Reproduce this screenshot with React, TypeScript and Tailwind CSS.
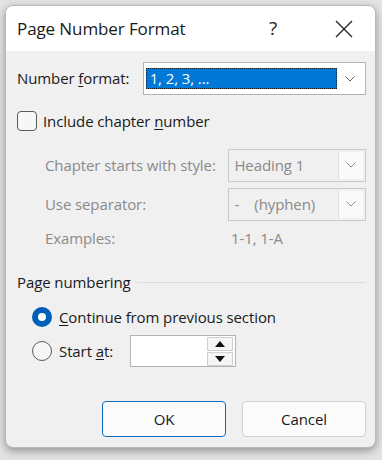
import * as React from "react";

const font = { fontFamily: '"Open Sans", "Noto Sans", sans-serif' };

function Chevron({ color = "#5f5f5f" }: { color?: string }) {
  return (
    <svg width="10" height="6" viewBox="0 0 10 6" fill="none">
      <path d="M0.5 0.5 L5 5 L9.5 0.5" stroke={color} strokeWidth="1" />
    </svg>
  );
}

function DisabledSelect({ value }: { value: string }) {
  return (
    <div className="flex h-[33px] w-[138px] items-center border border-[#c9c9c9] bg-[#f0f0f0] pl-[5px] pr-[2px]">
      <span className="flex-1 whitespace-pre text-[15px] text-[#8a8a8a]">{value}</span>
      <div className="flex h-[27px] w-[25px] items-center justify-center border-l border-[#dedede] bg-[#fafafa]">
        <Chevron color="#8a8a8a" />
      </div>
    </div>
  );
}

function Radio({ checked }: { checked?: boolean }) {
  if (checked) {
    return (
      <div className="flex h-[20px] w-[20px] items-center justify-center rounded-full bg-[#005fb8]">
        <div className="h-[8px] w-[8px] rounded-full bg-white" />
      </div>
    );
  }
  return <div className="h-[20px] w-[20px] rounded-full border border-[#5a5a5a] bg-[#f7f7f7]" />;
}

export default function App() {
  return (
    <div className="h-[460px] w-[382px] bg-[#e3e3e3] px-[5px] pt-[5px] tracking-[-0.1px]" style={font}>
      <div className="h-[443px] w-[371px] overflow-hidden rounded-t-[8px] rounded-b-[8px] border border-[#b8b8b8] bg-[#f0f0f0] shadow-[0_3px_8px_rgba(0,0,0,0.35)]">
        {/* title bar */}
        <div className="flex h-[45px] items-center bg-white pl-[11px] text-[#1a1a1a]">
          <span className="text-[17px]">Page Number Format</span>
          <span className="ml-auto mr-[58px] text-[19px] text-[#222]">?</span>
          <svg width="18" height="18" viewBox="0 0 18 18" className="mr-[22px]">
            <path d="M1 1 L17 17 M17 1 L1 17" stroke="#222" strokeWidth="1.3" />
          </svg>
        </div>

        {/* body */}
        <div className="flex flex-col pl-[11px] pr-[9px] text-[15px] text-[#1a1a1a]">
          {/* number format */}
          <div className="mt-[11px] flex items-center">
            <span className="w-[126px]">
              Number <span className="underline underline-offset-2">f</span>ormat:
            </span>
            <div className="flex h-[33px] w-[224px] items-center border border-[#b3b3b3] bg-white pl-[2px] pr-[2px]">
              <div className="flex h-[21px] flex-1 items-center border border-dotted border-[#1a1a1a] bg-[#0078d7] pl-[3px] text-white">
                1, 2, 3, ...
              </div>
              <div className="flex h-[27px] w-[26px] items-center justify-center">
                <Chevron />
              </div>
            </div>
          </div>

          {/* include chapter number */}
          <div className="mt-[15px] flex items-center">
            <div className="h-[20px] w-[20px] rounded-[4px] border border-[#5a5a5a] bg-[#f7f7f7]" />
            <span className="ml-[6px]">
              Include chapter <span className="underline underline-offset-2">n</span>umber
            </span>
          </div>

          {/* chapter style */}
          <div className="mt-[16px] flex items-center pl-[28px] text-[#8a8a8a]">
            <span className="w-[184px]">Chapter starts with style:</span>
            <DisabledSelect value="Heading 1" />
          </div>
          <div className="mt-[6px] flex items-center pl-[28px] text-[#8a8a8a]">
            <span className="w-[184px]">Use separator:</span>
            <DisabledSelect value="-    (hyphen)" />
          </div>
          <div className="mt-[6px] flex items-center pl-[28px] text-[#8a8a8a]">
            <span className="w-[186px]">Examples:</span>
            <span>1-1, 1-A</span>
          </div>

          {/* page numbering */}
          <div className="mt-[22px] flex items-center">
            <span>Page numbering</span>
            <div className="ml-[6px] h-px flex-1 bg-[#dcdcdc]" />
          </div>
          <div className="mt-[12px] flex items-center pl-[15px]">
            <Radio checked />
            <span className="ml-[7px]">
              <span className="underline underline-offset-2">C</span>ontinue from previous section
            </span>
          </div>
          <div className="mt-[7px] flex items-center pl-[15px]">
            <Radio />
            <span className="ml-[7px] w-[71px]">
              Start <span className="underline underline-offset-2">a</span>t:
            </span>
            <div className="flex h-[32px] w-[106px] items-center border border-[#b3b3b3] bg-white pr-[2px]">
              <div className="flex-1" />
              <div className="flex w-[26px] flex-col gap-[1px]">
                <div className="flex h-[14px] items-center justify-center border border-[#d0d0d0] bg-[#f5f5f5]">
                  <svg width="10" height="6" viewBox="0 0 10 6">
                    <path d="M0 6 L5 0 L10 6 Z" fill="#111" />
                  </svg>
                </div>
                <div className="flex h-[14px] items-center justify-center border border-[#d0d0d0] bg-[#f5f5f5]">
                  <svg width="10" height="6" viewBox="0 0 10 6">
                    <path d="M0 0 L5 6 L10 0 Z" fill="#111" />
                  </svg>
                </div>
              </div>
            </div>
          </div>

          {/* buttons */}
          <div className="mt-[34px] flex justify-end gap-[16px]">
            <button className="h-[36px] w-[124px] rounded-[4px] border border-[#0f6cbd] bg-[#fbfbfb] text-[15px] text-[#1a1a1a]">
              OK
            </button>
            <button className="h-[36px] w-[124px] rounded-[4px] border border-[#d0d0d0] bg-[#fbfbfb] text-[15px] text-[#1a1a1a]">
              Cancel
            </button>
          </div>
        </div>
      </div>
    </div>
  );
}
